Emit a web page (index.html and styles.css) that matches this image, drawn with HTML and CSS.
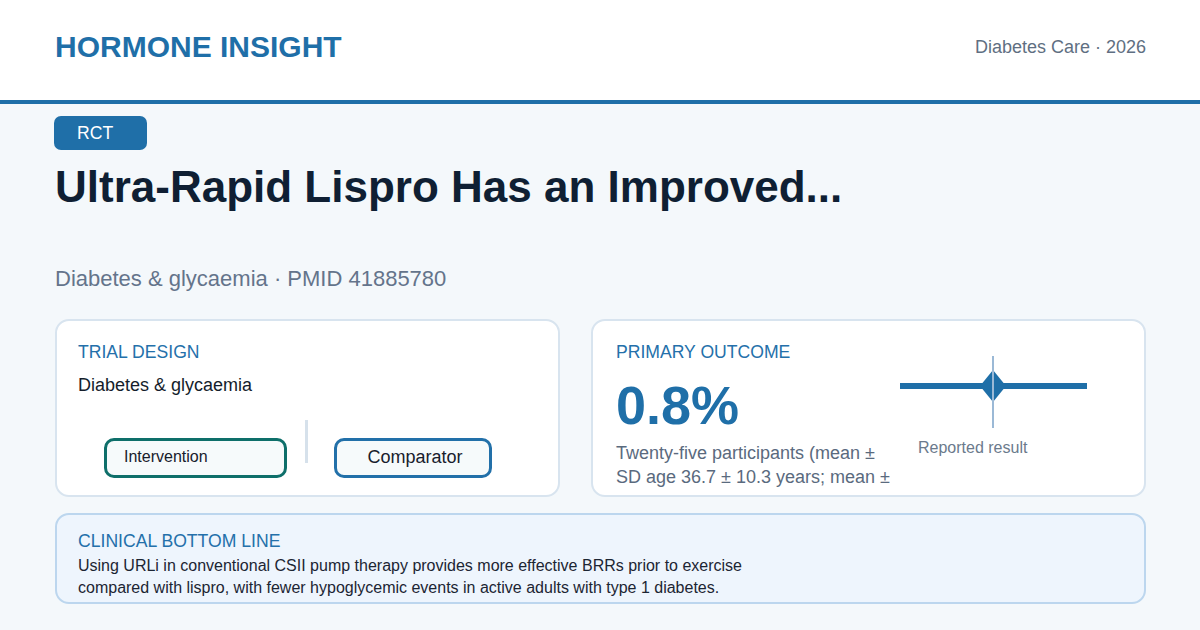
FILE: index.html
```html
<!DOCTYPE html>
<html lang="en">
<head>
<meta charset="utf-8">
<title>Hormone Insight</title>
<link rel="stylesheet" href="styles.css">
</head>
<body>
<div class="page">
  <header class="topbar">
    <div class="logo">HORMONE INSIGHT</div>
    <div class="source">Diabetes Care · 2026</div>
  </header>
  <main class="content">
    <span class="badge">RCT</span>
    <h1 class="title">Ultra-Rapid Lispro Has an Improved...</h1>
    <p class="subtitle">Diabetes &amp; glycaemia · PMID 41885780</p>
    <section class="cards">
      <div class="card design">
        <div class="label">TRIAL DESIGN</div>
        <div class="design-text">Diabetes &amp; glycaemia</div>
        <div class="arms">
          <div class="arm arm-int">Intervention</div>
          <div class="arm-divider"></div>
          <div class="arm arm-comp">Comparator</div>
        </div>
      </div>
      <div class="card outcome">
        <div class="outcome-main">
          <div class="label">PRIMARY OUTCOME</div>
          <div class="value">0.8%</div>
          <div class="desc">Twenty-five participants (mean ± SD age 36.7 ± 10.3 years; mean ±</div>
        </div>
        <div class="chart">
          <svg class="forest" width="200" height="74" viewBox="0 0 200 74" aria-hidden="true">
            <rect x="0" y="27" width="187" height="6" fill="#1f6fa8"/>
            <polygon points="80,30 93,14 106,30 93,46" fill="#1f6fa8"/>
            <rect x="92" y="0" width="2" height="72" fill="#9bb9d6"/>
          </svg>
          <div class="caption">Reported result</div>
        </div>
      </div>
    </section>
    <section class="bottom">
      <div class="label">CLINICAL BOTTOM LINE</div>
      <p class="bottom-text">Using URLi in conventional CSII pump therapy provides more effective BRRs prior to exercise compared with lispro, with fewer hypoglycemic events in active adults with type 1 diabetes.</p>
    </section>
  </main>
</div>
</body>
</html>
```
FILE: styles.css
```css
html, body {
  margin: 0;
  padding: 0;
}
body {
  width: 1200px;
  height: 630px;
  overflow: hidden;
  background: #f4f8fb;
  font-family: "Liberation Sans", Arial, sans-serif;
}
.page {
  width: 1200px;
  height: 630px;
}
.topbar {
  background: #ffffff;
  border-bottom: 4px solid #1f6fa8;
  display: flex;
  align-items: center;
  justify-content: space-between;
  padding: 0 54px 6px 55px;
  box-sizing: border-box;
  height: 104px;
}
.logo {
  font-size: 30px;
  font-weight: 700;
  color: #1f6fa8;
}
.source {
  font-size: 18px;
  color: #5f6f82;
}
.content {
  padding: 12px 54px 0 55px;
}
.badge {
  display: inline-block;
  height: 34px;
  line-height: 34px;
  padding: 0 34px 0 23px;
  margin-left: -1px;
  background: #1f6fa8;
  color: #ffffff;
  font-size: 17.6px;
  border-radius: 7px;
}
.title {
  margin: 11px 0 0 0;
  font-size: 44px;
  line-height: 1.2;
  font-weight: 700;
  color: #0f1f33;
}
.subtitle {
  margin: 52px 0 0 0;
  font-size: 22px;
  line-height: 1.2;
  color: #64748b;
}
.cards {
  margin-top: 27px;
  display: grid;
  grid-template-columns: 505px 555px;
  gap: 31px;
  height: 178px;
}
.card {
  background: #ffffff;
  border: 2px solid #d8e4ef;
  border-radius: 14px;
  padding: 21px 22px 0 21px;
  box-sizing: border-box;
  overflow: hidden;
}
.label {
  font-size: 17.6px;
  line-height: 1.2;
  color: #2470aa;
}
.design-text {
  margin-top: 12px;
  font-size: 18px;
  line-height: 1.2;
  color: #141d2b;
}
.arms {
  display: flex;
  align-items: flex-start;
  margin-top: 23px;
  padding-left: 26px;
}
.arm {
  box-sizing: border-box;
  height: 40px;
  margin-top: 18px;
  border: 3px solid #0e6f6a;
  border-radius: 10px;
  background: #f6fafb;
  color: #18202c;
  display: flex;
  align-items: center;
}
.arm-int {
  width: 183px;
  padding-left: 17px;
  font-size: 16px;
  padding-bottom: 1px;
}
.arm-comp {
  width: 158px;
  justify-content: center;
  font-size: 18px;
  border-color: #2270a9;
  padding-left: 4px;
}
.arm-divider {
  width: 3px;
  height: 43px;
  background: #d6e1eb;
  margin: 0 26px 0 18px;
}
.outcome {
  display: flex;
  padding-left: 23px;
}
.outcome-main {
  width: 284px;
  flex: none;
}
.value {
  margin-top: 13px;
  font-size: 54px;
  line-height: 1.1;
  font-weight: 700;
  color: #1f6fa8;
}
.desc {
  margin-top: 5px;
  font-size: 18px;
  line-height: 24px;
  color: #5a6a7e;
  padding-right: 4px;
}
.chart {
  padding-top: 14px;
}
.forest {
  display: block;
}
.caption {
  margin-top: 8px;
  padding-left: 18px;
  font-size: 16px;
  line-height: 1.2;
  color: #6b7a8c;
}
.bottom {
  margin-top: 16px;
  height: 91px;
  box-sizing: border-box;
  background: #eef5fd;
  border: 2px solid #bcd6ee;
  border-radius: 14px;
  padding: 16px 22px 0 21px;
}
.bottom-text {
  margin: 3px 0 0 0;
  font-size: 16px;
  line-height: 21.6px;
  color: #1c2533;
  max-width: 700px;
}
```
